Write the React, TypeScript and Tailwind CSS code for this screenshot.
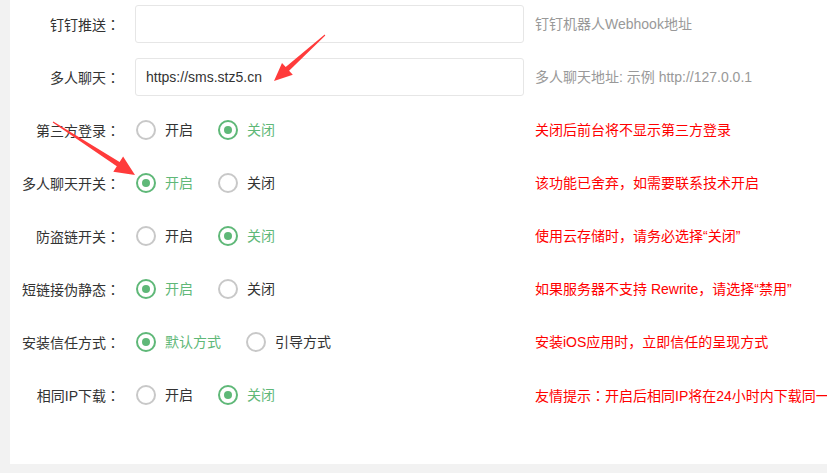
import React from "react";

type Opt = { label: string; checked: boolean };
type Row =
  | { kind: "input"; label: string; value: string; help: string }
  | { kind: "radio"; label: string; opts: Opt[]; help: string };

const rows: Row[] = [
  { kind: "input", label: "钉钉推送：", value: "", help: "钉钉机器人Webhook地址" },
  { kind: "input", label: "多人聊天：", value: "https://sms.stz5.cn", help: "多人聊天地址: 示例 http://127.0.0.1" },
  { kind: "radio", label: "第三方登录：", opts: [{ label: "开启", checked: false }, { label: "关闭", checked: true }], help: "关闭后前台将不显示第三方登录" },
  { kind: "radio", label: "多人聊天开关：", opts: [{ label: "开启", checked: true }, { label: "关闭", checked: false }], help: "该功能已舍弃，如需要联系技术开启" },
  { kind: "radio", label: "防盗链开关：", opts: [{ label: "开启", checked: false }, { label: "关闭", checked: true }], help: "使用云存储时，请务必选择“关闭”" },
  { kind: "radio", label: "短链接伪静态：", opts: [{ label: "开启", checked: true }, { label: "关闭", checked: false }], help: "如果服务器不支持 Rewrite，请选择“禁用”" },
  { kind: "radio", label: "安装信任方式：", opts: [{ label: "默认方式", checked: true }, { label: "引导方式", checked: false }], help: "安装iOS应用时，立即信任的呈现方式" },
  { kind: "radio", label: "相同IP下载：", opts: [{ label: "开启", checked: false }, { label: "关闭", checked: true }], help: "友情提示：开启后相同IP将在24小时内下载同一" },
];

function Colon({ text }: { text: string }) {
  const parts = text.split("：");
  return (
    <>
      {parts.map((p, i) => (
        <React.Fragment key={i}>
          {p}
          {i < parts.length - 1 && (
            <span style={{ fontFamily: '"Noto Sans CJK JP", sans-serif' }}>：</span>
          )}
        </React.Fragment>
      ))}
    </>
  );
}

function Radio({ opt }: { opt: Opt }) {
  return (
    <div className="flex items-center mr-[25px]">
      {opt.checked ? (
        <span className="w-[20px] h-[20px] rounded-full border-[2px] border-[#5fb878] flex items-center justify-center">
          <span className="w-[8px] h-[8px] rounded-full bg-[#5fb878]" />
        </span>
      ) : (
        <span className="w-[20px] h-[20px] rounded-full border-[2px] border-[#c8c8c8]" />
      )}
      <span className={"ml-[9px] leading-[20px] " + (opt.checked ? "text-[#5fb878]" : "text-[#333]")}>{opt.label}</span>
    </div>
  );
}

export default function App() {
  return (
    <div
      className="relative w-[827px] h-[473px] bg-[#f2f2f2] overflow-hidden text-[14px]"
      style={{ fontFamily: '"Liberation Sans", "Noto Sans CJK SC", sans-serif' }}
    >
      <div className="ml-[10px] h-[464px] bg-white pt-[5px] overflow-hidden">
        {rows.map((r, i) => (
          <div key={i} className="flex items-center h-[38px] mb-[15px] whitespace-nowrap">
            <div className="w-[125px] shrink-0 pr-[15px] text-right leading-[20px] text-[#333]">
              <Colon text={r.label} />
            </div>
            <div className="w-[389px] shrink-0 h-[38px] flex items-center">
              {r.kind === "input" ? (
                <div className="w-full h-[38px] border border-[#e6e6e6] rounded-[3px] px-[10px] flex items-center text-[#333] leading-[20px]">
                  {r.value}
                </div>
              ) : (
                <div className="flex items-center pl-[1px]">
                  {r.opts.map((o, j) => (
                    <Radio key={j} opt={o} />
                  ))}
                </div>
              )}
            </div>
            <div className={"ml-[11px] leading-[20px] " + (r.kind === "input" ? "text-[#999]" : "text-[#ff0000]")}>
              <Colon text={r.help} />
            </div>
          </div>
        ))}
      </div>
      <svg className="absolute left-0 top-0 pointer-events-none" width="827" height="473" viewBox="0 0 827 473">
        <polygon
          fill="#ff3b3b"
          points="325.3,35.4 289.1,70.8 292.8,74.8 274,81 282,63 285.7,67 324.7,34.6"
        />
        <polygon
          fill="#ff3b3b"
          points="52.7,122.4 116.8,166.2 113.3,171.7 135,175 123.1,156.5 119.6,162 53.3,121.6"
        />
      </svg>
    </div>
  );
}
